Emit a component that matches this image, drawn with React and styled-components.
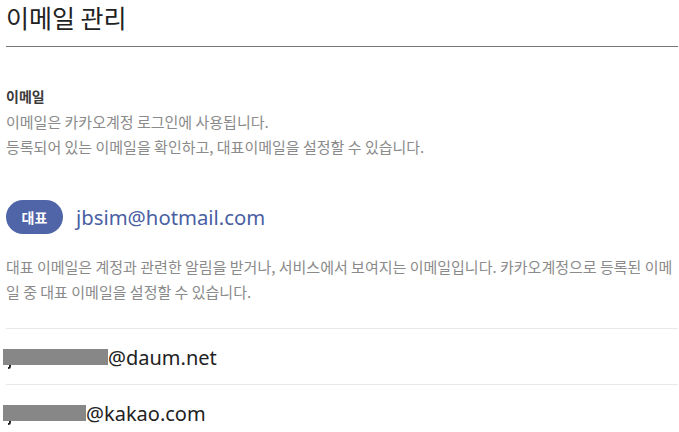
import React from "react";
import styled, { createGlobalStyle } from "styled-components";

const GlobalStyle = createGlobalStyle`
  body {
    margin: 0;
    background: #fff;
    font-family: "Noto Sans CJK KR", "Noto Sans", sans-serif;
  }
`;

const Page = styled.div`
  padding: 0 1px 0 6px;
`;

const Header = styled.div`
  height: 46px;
  border-bottom: 1px solid #777;
`;

const Title = styled.h2`
  margin: 0;
  font-size: 25px;
  font-weight: 400;
  line-height: 34px;
  color: #222;
`;

const Section = styled.div`
  padding-top: 37px;
`;

const Label = styled.h3`
  margin: 0;
  font-size: 14px;
  font-weight: 700;
  line-height: 25px;
  color: #3a3a3a;
`;

const Desc = styled.p`
  margin: 0;
  font-size: 15px;
  line-height: 25px;
  color: #8a8a8a;
`;

const PrimaryRow = styled.div`
  display: flex;
  align-items: center;
  gap: 13px;
  margin-top: 41px;
`;

const Badge = styled.span`
  display: inline-flex;
  align-items: center;
  justify-content: center;
  width: 57px;
  height: 34px;
  border-radius: 17px;
  background: #4f65a8;
  color: #fff;
  font-size: 14px;
  font-weight: 700;
`;

const PrimaryEmail = styled.span`
  font-family: "Noto Sans", sans-serif;
  font-size: 20.3px;
  color: #4a5fa3;
`;

const Note = styled(Desc)`
  margin-top: 20px;
`;

const List = styled.ul`
  list-style: none;
  margin: 24px 0 0;
  padding: 0;
`;

const Row = styled.li`
  display: flex;
  align-items: center;
  height: 56px;
  padding-top: 1px;
  box-sizing: border-box;
  border-top: 1px solid #e8e8e8;
  font-family: "Noto Sans", sans-serif;
  font-size: 20px;
  color: #222;
`;

const Masked = styled.span`
  position: relative;
  display: inline-block;
  margin-left: -3px;
  width: ${(p) => p.w}px;
  height: 16px;
  background: #878787;
  &::after {
    content: "";
    position: absolute;
    left: 5px;
    top: 16px;
    width: 3px;
    height: 4px;
    border-bottom: 2px solid #222;
    border-right: 2px solid #222;
    border-bottom-right-radius: 3px;
    box-sizing: border-box;
  }
`;

const emails = [
  { hidden: 105, domain: "@daum.net" },
  { hidden: 83, domain: "@kakao.com" },
];

export default function App() {
  return (
    <Page>
      <GlobalStyle />
      <Header>
        <Title>이메일 관리</Title>
      </Header>
      <Section>
        <Label>이메일</Label>
        <Desc>
          이메일은 카카오계정 로그인에 사용됩니다.
          <br />
          등록되어 있는 이메일을 확인하고, 대표이메일을 설정할 수 있습니다.
        </Desc>
        <PrimaryRow>
          <Badge>대표</Badge>
          <PrimaryEmail>jbsim@hotmail.com</PrimaryEmail>
        </PrimaryRow>
        <Note>
          대표 이메일은 계정과 관련한 알림을 받거나, 서비스에서 보여지는 이메일입니다. 카카오계정으로 등록된 이메일 중 대표 이메일을 설정할 수 있습니다.
        </Note>
        <List>
          {emails.map((e) => (
            <Row key={e.domain}>
              <Masked w={e.hidden} />
              {e.domain}
            </Row>
          ))}
        </List>
      </Section>
    </Page>
  );
}
